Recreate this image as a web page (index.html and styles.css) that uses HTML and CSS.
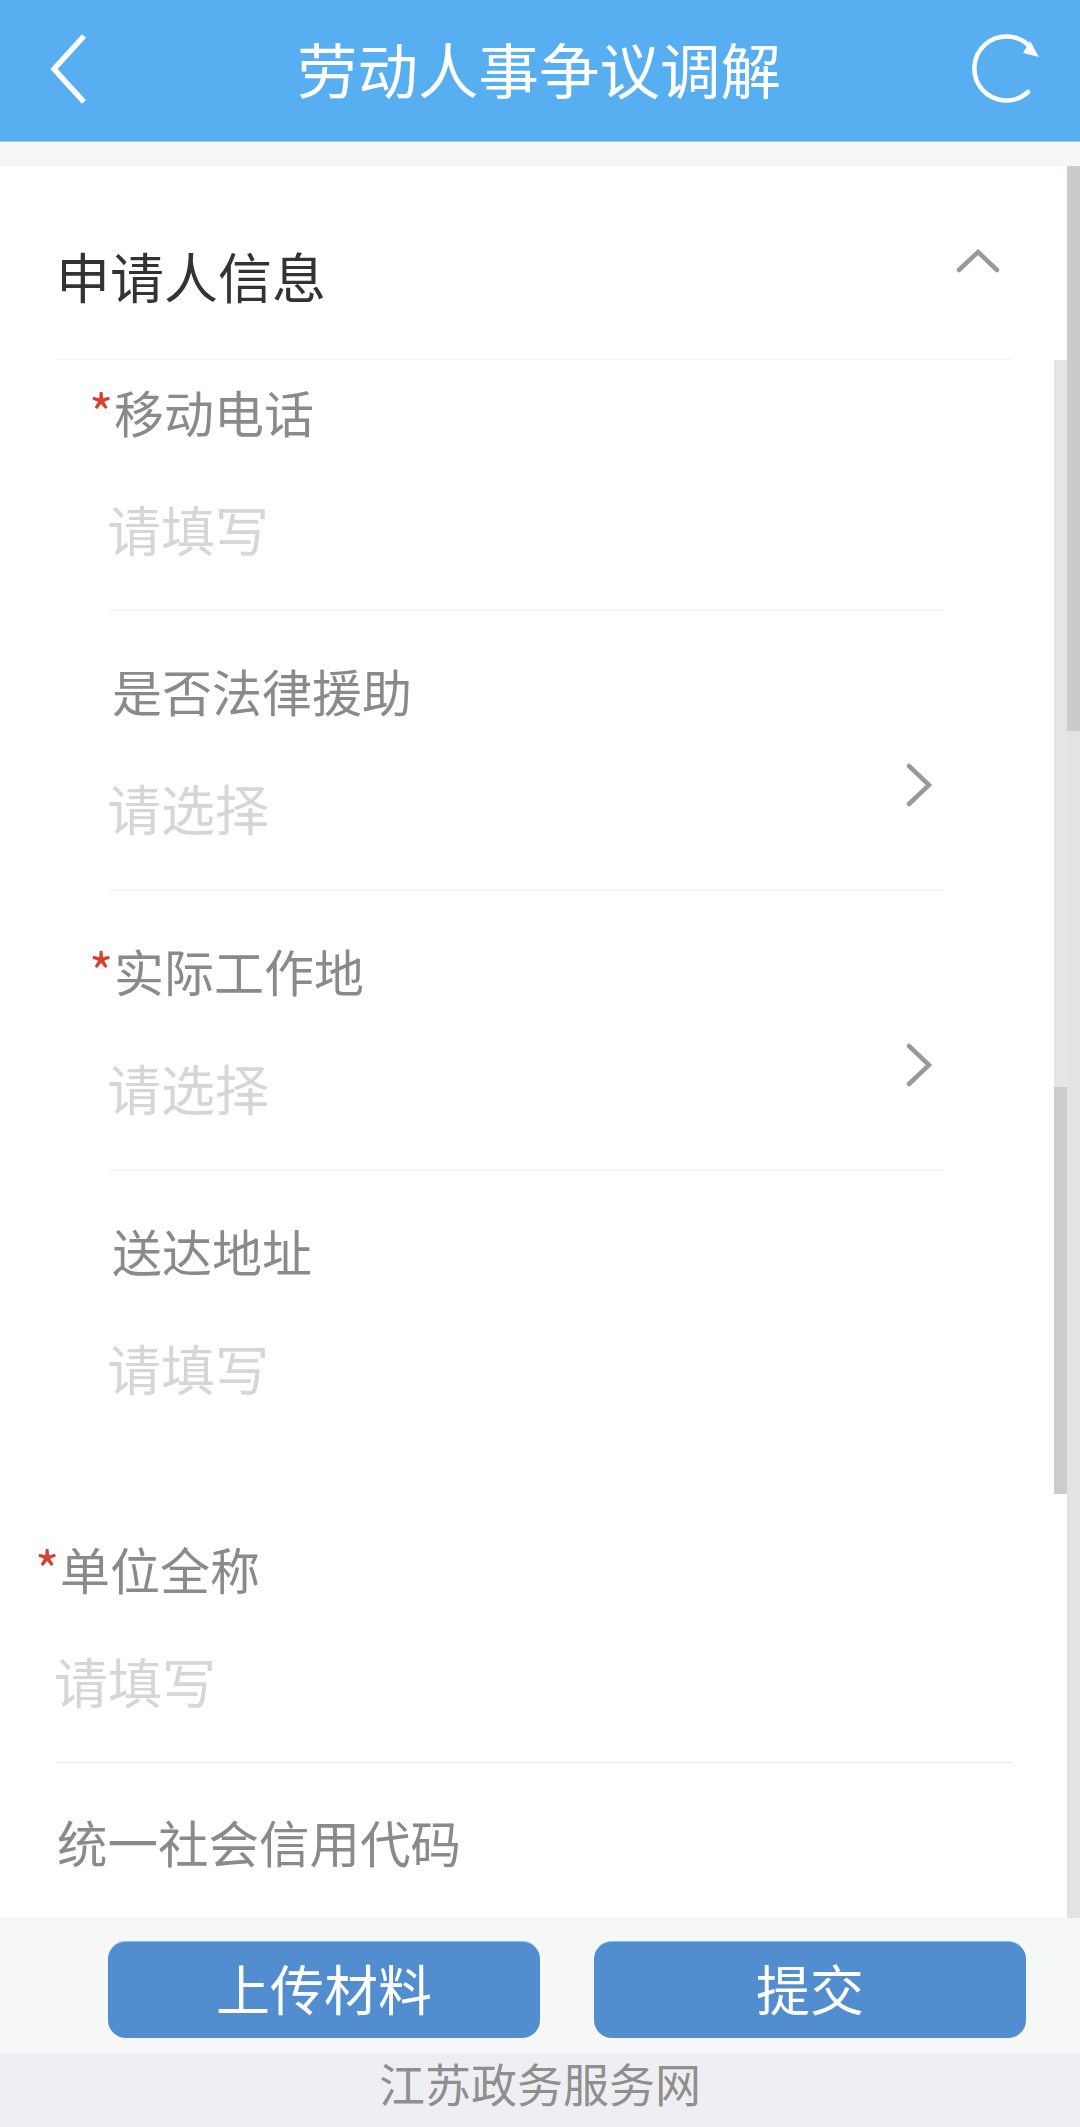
FILE: index.html
```html
<!DOCTYPE html>
<html lang="zh-CN">
<head>
<meta charset="utf-8">
<title>劳动人事争议调解</title>
<link rel="stylesheet" href="styles.css">
</head>
<body>
<div class="page">
  <header class="topbar">
    <svg class="icon-back" width="44" height="76" viewBox="0 0 44 76"><path d="M37 5 L7 38 L37 71" fill="none" stroke="#fff" stroke-width="5.5"/></svg>
    <h1 class="title">劳动人事争议调解</h1>
    <svg class="icon-refresh" width="72" height="72" viewBox="0 0 72 72"><path d="M57 58 A32 32 0 1 1 60 14" fill="none" stroke="#fff" stroke-width="4.5" stroke-linecap="round"/><path d="M68 23 L59 7 L52 19 Z" fill="#fff"/></svg>
  </header>
  <div class="strip"></div>
  <main class="content">
    <div class="section-head">
      <h2 class="section-title">申请人信息</h2>
      <svg class="icon-up" width="44" height="24" viewBox="0 0 44 24"><path d="M3 21 L22 3 L41 21" fill="none" stroke="#999" stroke-width="4.5" stroke-linecap="round"/></svg>
    </div>
    <div class="group">
      <div class="item item-first">
        <div class="item-text">
          <div class="label"><span class="star">*</span>移动电话</div>
          <div class="placeholder">请填写</div>
        </div>
      </div>
      <div class="item">
        <div class="item-text">
          <div class="label">是否法律援助</div>
          <div class="placeholder">请选择</div>
        </div>
        <svg class="icon-right" width="26" height="44" viewBox="0 0 26 44"><path d="M3 3 L23 22 L3 41" fill="none" stroke="#999" stroke-width="4.5" stroke-linecap="round"/></svg>
      </div>
      <div class="item">
        <div class="item-text">
          <div class="label"><span class="star">*</span>实际工作地</div>
          <div class="placeholder">请选择</div>
        </div>
        <svg class="icon-right" width="26" height="44" viewBox="0 0 26 44"><path d="M3 3 L23 22 L3 41" fill="none" stroke="#999" stroke-width="4.5" stroke-linecap="round"/></svg>
      </div>
      <div class="item item-plain">
        <div class="item-text">
          <div class="label">送达地址</div>
          <div class="placeholder">请填写</div>
        </div>
      </div>
    </div>
    <div class="group-wide">
      <div class="item item-company">
        <div class="item-text">
          <div class="label"><span class="star">*</span>单位全称</div>
          <div class="placeholder">请填写</div>
        </div>
      </div>
      <div class="item item-plain item-last">
        <div class="label">统一社会信用代码</div>
      </div>
    </div>
    <div class="scroll-outer"><div class="thumb-outer"></div></div>
    <div class="scroll-inner"><div class="thumb-inner"></div></div>
  </main>
  <div class="actions">
    <button class="btn">上传材料</button>
    <button class="btn">提交</button>
  </div>
  <footer class="footer">江苏政务服务网</footer>
</div>
</body>
</html>
```
FILE: styles.css
```css
* { box-sizing: border-box; }
html, body { margin: 0; padding: 0; }
body { font-family: "Noto Sans CJK SC", "Noto Sans", sans-serif; background: #fff; }
.page { width: 1080px; height: 2127px; display: flex; flex-direction: column; overflow: hidden; }

.topbar { flex: 0 0 142px; background: #57aef0; display: flex; align-items: center; justify-content: space-between; padding: 0 37px 0 47px; border-bottom: 1px solid #9fd3f5; }
.title { margin: -5px 0 0 16px; font-size: 60.5px; line-height: 70px; font-weight: 400; color: #fff; }
.icon-back { display: block; margin-top: -4px; }
.icon-refresh { display: block; margin-top: -2px; }

.strip { flex: 0 0 24px; background: #f7f6f4; }

.content { position: relative; flex: 1 1 auto; background: #fff; padding: 0 68px 0 56px; overflow: hidden; }
.section-head { height: 194px; border-bottom: 1px solid #f3f3f3; display: flex; justify-content: space-between; align-items: flex-start; padding-top: 75px; }
.section-title { margin: 0; font-size: 54px; line-height: 70px; font-weight: 400; color: #333; }
.icon-up { margin: 8px 12px 0 0; }

.group { padding: 0 68px 0 54px; }
.item { display: flex; justify-content: space-between; align-items: flex-start; height: 280px; padding-top: 44px; border-bottom: 1px solid #efefef; }
.item-first { height: 251px; padding-top: 16px; }
.item-plain { border-bottom: 0; }
.item-company { height: 275px; padding-top: 45px; border-bottom: 1px solid #e8e8e8; }
.group .item-plain { height: 280px; }
.group-wide { margin-top: 37px; }
.item-last { height: auto; padding-top: 43px; }

.label { font-size: 50px; line-height: 70px; color: #8a8a8a; padding-left: 2px; white-space: nowrap; }
.item-last .label { font-size: 50.5px; padding-left: 1px; }
.star { color: #d9402f; font-size: 52px; line-height: 50px; margin-left: -23px; margin-right: 2px; display: inline-block; width: 23px; }
.placeholder { font-size: 54px; line-height: 70px; margin-top: 48px; margin-left: -3px; color: #d6d6d6; white-space: nowrap; }
.item-company .placeholder { margin-top: 43px; margin-left: -2px; }
.icon-right { margin: 108px 12px 0 0; }

.scroll-outer { position: absolute; top: 0; right: 0; bottom: 0; width: 13px; background: #e4e3e3; }
.thumb-outer { height: 565px; background: #cccaca; }
.scroll-inner { position: absolute; top: 194px; right: 13px; height: 1134px; width: 13px; background: #e6e5e5; }
.thumb-inner { margin-top: 727px; height: 407px; background: #cccccc; }

.actions { flex: 0 0 136px; background: #f6f7f7; display: flex; justify-content: space-between; padding: 23px 54px 16px 108px; }
.btn { width: 432px; height: 97px; border: 0; border-top: 1px solid #7fc3f0; border-radius: 18px; background: #528dd0; color: #fff; font-family: inherit; font-size: 54px; line-height: 66px; padding: 0 0 5px; }

.footer { flex: 0 0 73px; background: #efeff3; color: #8f8f8f; font-size: 46px; line-height: 56px; text-align: center; }
```
